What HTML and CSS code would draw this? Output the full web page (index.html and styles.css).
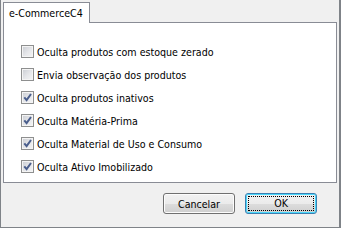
FILE: index.html
```html
<!DOCTYPE html>
<html lang="pt-BR">
<head>
  <meta charset="UTF-8" />
  <title>e-CommerceC4</title>
  <link rel="stylesheet" href="styles.css">
</head>
<body>
  <div class="window">
    <div class="tabs">
      <div class="tab">e-CommerceC4</div>
    </div>
    <div class="panel">
      <label class="option"><span class="box"></span>Oculta produtos com estoque zerado</label>
      <label class="option"><span class="box"></span>Envia observação dos produtos</label>
      <label class="option"><span class="box checked"><svg viewBox="0 0 9 9"><path d="M1.3 4.4 L3.6 7.2 L8 1" /></svg></span>Oculta produtos inativos</label>
      <label class="option"><span class="box checked"><svg viewBox="0 0 9 9"><path d="M1.3 4.4 L3.6 7.2 L8 1" /></svg></span>Oculta Matéria-Prima</label>
      <label class="option"><span class="box checked"><svg viewBox="0 0 9 9"><path d="M1.3 4.4 L3.6 7.2 L8 1" /></svg></span>Oculta Material de Uso e Consumo</label>
      <label class="option"><span class="box checked"><svg viewBox="0 0 9 9"><path d="M1.3 4.4 L3.6 7.2 L8 1" /></svg></span>Oculta Ativo Imobilizado</label>
    </div>
    <div class="footer">
      <button class="btn">Cancelar</button>
      <button class="btn btn-default"><span class="focus">OK</span></button>
    </div>
  </div>
</body>
</html>
```

FILE: styles.css
```css
* {
  box-sizing: border-box;
}

body {
  margin: 0;
  background: #f0f0f0;
  font-family: "DejaVu Sans Condensed", "Liberation Sans", sans-serif;
  font-size: 10.6px;
  color: #000;
}

.window {
  width: 341px;
  height: 228px;
  border: 1px solid #7f8388;
  border-top: none;
  border-right-width: 2px;
  padding: 2px 2px 0 2px;
  background: #f0f0f0;
}

.tabs {
  display: flex;
  height: 21px;
  margin-bottom: -1px;
  position: relative;
  z-index: 1;
}

.tab {
  width: 87px;
  height: 21px;
  padding: 4px 0 0 5px;
  background: #fff;
  border: 1px solid #898c95;
  border-bottom: none;
  white-space: nowrap;
}

.panel {
  width: 334px;
  height: 161px;
  background: #fff;
  border: 1px solid #898c95;
  padding: 22px 0 0 17px;
  display: flex;
  flex-direction: column;
  gap: 10px;
}

.option {
  display: flex;
  align-items: center;
  height: 13px;
  gap: 3px;
  white-space: nowrap;
}

.box {
  flex: none;
  width: 13px;
  height: 13px;
  border: 1px solid #8e8f8f;
  background: linear-gradient(135deg, #c9ccd2 0%, #e6e7ea 55%, #f4f4f5 100%);
  box-shadow: inset 0 0 0 1px #f4f4f4;
  display: flex;
  align-items: center;
  justify-content: center;
}

.box svg {
  width: 9px;
  height: 9px;
}

.box path {
  fill: none;
  stroke: #4a5e8c;
  stroke-width: 2;
}

.footer {
  display: flex;
  justify-content: flex-end;
  gap: 10px;
  padding: 10px 20px 0 0;
}

.btn {
  width: 72px;
  height: 21px;
  border: 1px solid #707070;
  border-radius: 3px;
  background: linear-gradient(#f2f2f2 0%, #ebebeb 50%, #dddddd 50%, #cfcfcf 100%);
  box-shadow: inset 0 0 0 1px #fcfcfc;
  font: inherit;
  padding: 0;
  color: #000;
}

.btn-default {
  border-color: #3c7fb1;
  box-shadow: inset 0 0 0 1px #48d7fb;
  padding: 2px;
}

.focus {
  display: block;
  height: 100%;
  border: 1px dotted #000;
  line-height: 13px;
}
```
